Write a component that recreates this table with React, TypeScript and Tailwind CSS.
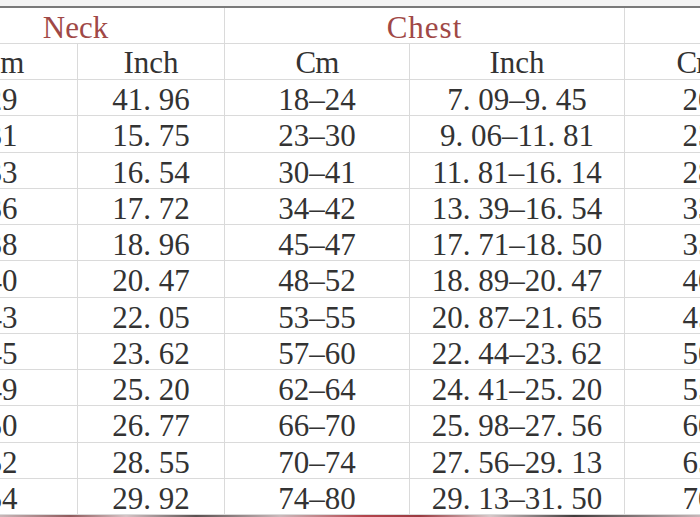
import {FC} from 'react';

type Row = {neckCm: string; neckIn: string; chestCm: string; chestIn: string; nextCm: string};

const rows: Row[] = [
  {neckCm: '29', neckIn: '41. 96', chestCm: '18–24', chestIn: '7. 09–9. 45', nextCm: '20'},
  {neckCm: '31', neckIn: '15. 75', chestCm: '23–30', chestIn: '9. 06–11. 81', nextCm: '23'},
  {neckCm: '33', neckIn: '16. 54', chestCm: '30–41', chestIn: '11. 81–16. 14', nextCm: '28'},
  {neckCm: '36', neckIn: '17. 72', chestCm: '34–42', chestIn: '13. 39–16. 54', nextCm: '33'},
  {neckCm: '38', neckIn: '18. 96', chestCm: '45–47', chestIn: '17. 71–18. 50', nextCm: '35'},
  {neckCm: '40', neckIn: '20. 47', chestCm: '48–52', chestIn: '18. 89–20. 47', nextCm: '40'},
  {neckCm: '43', neckIn: '22. 05', chestCm: '53–55', chestIn: '20. 87–21. 65', nextCm: '45'},
  {neckCm: '45', neckIn: '23. 62', chestCm: '57–60', chestIn: '22. 44–23. 62', nextCm: '50'},
  {neckCm: '49', neckIn: '25. 20', chestCm: '62–64', chestIn: '24. 41–25. 20', nextCm: '55'},
  {neckCm: '50', neckIn: '26. 77', chestCm: '66–70', chestIn: '25. 98–27. 56', nextCm: '60'},
  {neckCm: '52', neckIn: '28. 55', chestCm: '70–74', chestIn: '27. 56–29. 13', nextCm: '65'},
  {neckCm: '54', neckIn: '29. 92', chestCm: '74–80', chestIn: '29. 13–31. 50', nextCm: '70'},
];

const Cell: FC<{children?: React.ReactNode; className?: string}> = ({children, className = ''}) => (
  <div
    className={`flex items-center justify-center border-r border-b border-[#dadada] text-[31px] leading-none text-[#333] whitespace-nowrap ${className}`}>
    {children}
  </div>
);

export default function App() {
  return (
    <div
      className="w-[700px] h-[517px] overflow-hidden bg-white flex flex-col"
      style={{fontFamily: '"Liberation Serif", "Times New Roman", serif'}}>
      <div className="h-[6px] shrink-0 bg-[#f4f4f4]" />
      <div className="h-[2px] shrink-0 bg-[#7a7a7a]" />
      <div className="ml-[-73px] w-[845px] grid grid-cols-[151px_147px_185px_215px_147px] grid-rows-[36px_36px] auto-rows-[36.25px]">
        <Cell className="col-span-2 text-[27px] text-[#a04846] pt-[3px]">Neck</Cell>
        <Cell className="col-span-2 text-[28px] tracking-[1px] text-[#a04846] pt-[3px]">Chest</Cell>
        <Cell />
        <Cell className="pt-[2px] tracking-[-1px]">Cm</Cell>
        <Cell className="pt-[2px]">Inch</Cell>
        <Cell className="pt-[2px] tracking-[-1px]">Cm</Cell>
        <Cell className="pt-[2px]">Inch</Cell>
        <Cell className="pt-[2px] tracking-[-1px]">Cm</Cell>
        {rows.map((r) => (
          <>
            <Cell key={`${r.neckCm}-a`} className="pt-[4px]">{r.neckCm}</Cell>
            <Cell key={`${r.neckCm}-b`} className="pt-[4px]">{r.neckIn}</Cell>
            <Cell key={`${r.neckCm}-c`} className="pt-[4px]">{r.chestCm}</Cell>
            <Cell key={`${r.neckCm}-d`} className="pt-[4px]">{r.chestIn}</Cell>
            <Cell key={`${r.neckCm}-e`} className="pt-[4px]">{r.nextCm}</Cell>
          </>
        ))}
      </div>
      <div className="h-[4px] shrink-0 bg-[linear-gradient(90deg,#c9b7b9_0%,#8f5a5c_10%,#d6c4c6_18%,#5a5050_28%,#cbb9bb_40%,#b4434b_52%,#9a3a40_60%,#d7c9ca_70%,#3f3a3a_82%,#c8b6b8_100%)]" />
    </div>
  );
}
